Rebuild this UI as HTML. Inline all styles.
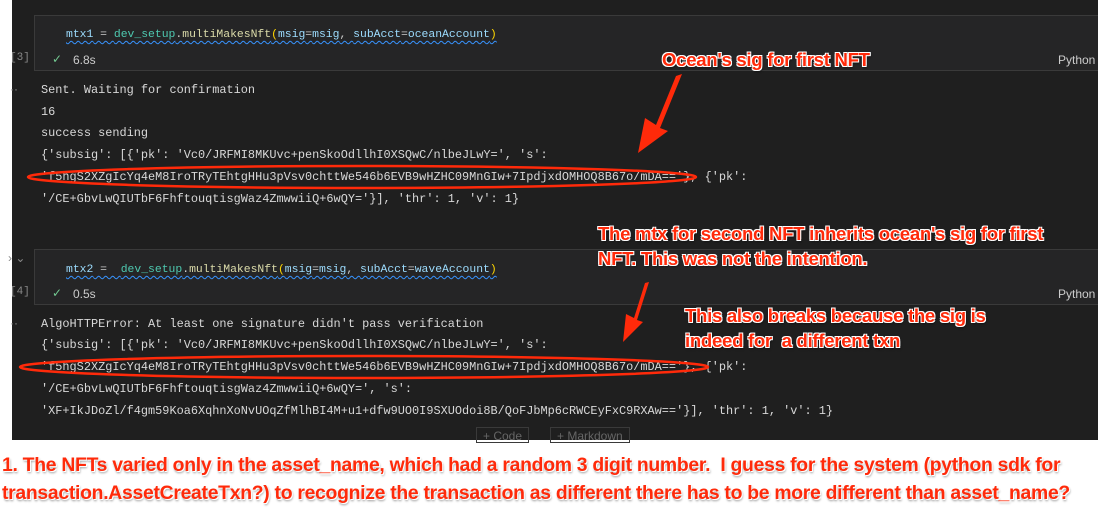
<!DOCTYPE html>
<html><head><meta charset="utf-8"><style>
*{margin:0;padding:0;box-sizing:border-box}
body{width:1098px;height:532px;background:#fff;position:relative;overflow:hidden;font-family:"Liberation Sans",sans-serif}
#dark{position:absolute;left:12px;top:0;width:1086px;height:440px;background:#1f1f1f}
.box{position:absolute;left:34px;width:1070px;border:1px solid #3a3a3a;background:#252526}
.m{position:absolute;font-family:"Liberation Mono",monospace;font-size:11.9px;color:#d8d8d8;white-space:pre;line-height:14px}
.c{font-size:11.4px;color:#ccc}
.sq{text-decoration:underline wavy #3794ff;text-underline-offset:3px;text-decoration-thickness:1px}
.v{color:#9cdcfe}.t{color:#4ec9b0}.f{color:#dcdcaa}.p{color:#ffd700}
.s{position:absolute;font-family:"Liberation Sans",sans-serif;font-size:12px;color:#ccc}
.ann{position:absolute;font-family:"Liberation Sans",sans-serif;font-weight:bold;color:#ff2a0a;font-size:18.6px;line-height:25px;white-space:pre;
text-shadow:1px 1px 0 #fff,-1px -1px 0 #fff,1px -1px 0 #fff,-1px 1px 0 #fff,1px 2px 2px rgba(0,0,0,.5);letter-spacing:-0.3px}
.bot{font-size:19.4px;line-height:28px;text-shadow:1px 1px 0 #fff,1px 2px 2px rgba(0,0,0,.4)}
.btn{position:absolute;top:427px;height:16px;border:1px solid #3a3a3a;color:#666;font-size:12px;padding:0 6px;line-height:16px}
</style></head><body>
<div id="dark"></div>
<div class="box" style="top:15px;height:56px"></div>
<div class="box" style="top:249px;height:56px"></div>
<div class="m c" style="left:66px;top:28px"><span class="sq"><span class="v">mtx1</span> = <span class="t">dev_setup</span>.<span class="f">multiMakesNft</span><span class="p">(</span><span class="v">msig</span>=<span class="v">msig</span>, <span class="v">subAcct</span>=<span class="v">oceanAccount</span><span class="p">)</span></span></div>
<div class="s" style="left:10px;top:52px;color:#888;font-family:'Liberation Mono',monospace;font-size:11px">[3]</div>
<div class="s" style="left:52px;top:52px;color:#73c991">✓</div>
<div class="s" style="left:73px;top:53px">6.8s</div>
<div class="s" style="left:1058px;top:53px">Python</div>
<div class="s" style="left:10px;top:82px;color:#888">··</div>
<div class="m" style="left:41px;top:83px">Sent. Waiting for confirmation</div>
<div class="m" style="left:41px;top:105px">16</div>
<div class="m" style="left:41px;top:126px">success sending</div>
<div class="m" style="left:41px;top:148px">{'subsig': [{'pk': 'Vc0/JRFMI8MKUvc+penSkoOdllhI0XSQwC/nlbeJLwY=', 's':</div>
<div class="m" style="left:41px;top:170px">'f5hgS2XZgIcYq4eM8IroTRyTEhtgHHu3pVsv0chttWe546b6EVB9wHZHC09MnGIw+7IpdjxdOMHOQ8B67o/mDA=='}, {'pk':</div>
<div class="m" style="left:41px;top:192px">'/CE+GbvLwQIUTbF6FhftouqtisgWaz4ZmwwiiQ+6wQY='}], 'thr': 1, 'v': 1}</div>

<div class="s" style="left:8px;top:251px;color:#888">› ⌄</div>
<div class="m c" style="left:66px;top:263px"><span class="sq"><span class="v">mtx2</span> =  <span class="t">dev_setup</span>.<span class="f">multiMakesNft</span><span class="p">(</span><span class="v">msig</span>=<span class="v">msig</span>, <span class="v">subAcct</span>=<span class="v">waveAccount</span><span class="p">)</span></span></div>
<div class="s" style="left:10px;top:286px;color:#888;font-family:'Liberation Mono',monospace;font-size:11px">[4]</div>
<div class="s" style="left:52px;top:286px;color:#73c991">✓</div>
<div class="s" style="left:73px;top:287px">0.5s</div>
<div class="s" style="left:1058px;top:287px">Python</div>
<div class="s" style="left:10px;top:316px;color:#888">··</div>
<div class="m" style="left:41px;top:317px">AlgoHTTPError: At least one signature didn't pass verification</div>
<div class="m" style="left:41px;top:338px">{'subsig': [{'pk': 'Vc0/JRFMI8MKUvc+penSkoOdllhI0XSQwC/nlbeJLwY=', 's':</div>
<div class="m" style="left:41px;top:360px">'f5hgS2XZgIcYq4eM8IroTRyTEhtgHHu3pVsv0chttWe546b6EVB9wHZHC09MnGIw+7IpdjxdOMHOQ8B67o/mDA=='}, {'pk':</div>
<div class="m" style="left:41px;top:382px">'/CE+GbvLwQIUTbF6FhftouqtisgWaz4ZmwwiiQ+6wQY=', 's':</div>
<div class="m" style="left:41px;top:404px">'XF+IkJDoZl/f4gm59Koa6XqhnXoNvUOqZfMlhBI4M+u1+dfw9UO0I9SXUOdoi8B/QoFJbMp6cRWCEyFxC9RXAw=='}], 'thr': 1, 'v': 1}</div>
<div class="btn" style="left:476px">+ Code</div>
<div class="btn" style="left:550px">+ Markdown</div>

<svg style="position:absolute;left:0;top:0" width="1098" height="532">
<ellipse cx="362" cy="177" rx="334" ry="11" fill="none" stroke="#ff2a0a" stroke-width="2.5"/>
<ellipse cx="364" cy="367" rx="344" ry="11" fill="none" stroke="#ff2a0a" stroke-width="2.5"/>
<polygon points="682,74 676,76 656,125 645,118 638,153 668,131 660,128" fill="#ff2a0a"/>
<polygon points="649,282 645,283 634,318 626,314 623,342 643,322 637,320" fill="#ff2a0a"/>
</svg>
<div class="ann" style="left:662px;top:47px">Ocean's sig for first NFT</div>
<div class="ann" style="left:598px;top:221px">The mtx for second NFT inherits ocean's sig for first
NFT. This was not the intention.</div>
<div class="ann" style="left:685px;top:303px">This also breaks because the sig is
indeed for  a different txn</div>
<div class="ann bot" style="left:2px;top:451px">1. The NFTs varied only in the asset_name, which had a random 3 digit number.  I guess for the system (python sdk for
transaction.AssetCreateTxn?) to recognize the transaction as different there has to be more different than asset_name?</div>
</body></html>
